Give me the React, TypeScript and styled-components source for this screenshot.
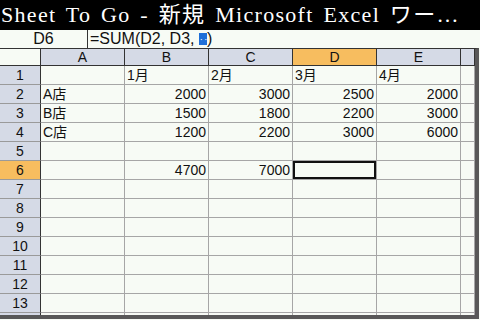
import React from "react";
import styled, { createGlobalStyle, css } from "styled-components";

const GlobalStyle = createGlobalStyle`
  html, body {
    margin: 0;
    padding: 0;
    width: 480px;
    height: 320px;
    overflow: hidden;
    background: #f7fbf5;
  }
`;

const Screen = styled.div`
  width: 480px;
  height: 320px;
  display: flex;
  flex-direction: column;
  background: #f7fbf5;
  font-family: "Liberation Sans", "Noto Sans CJK JP", sans-serif;
`;

const TitleBar = styled.div`
  height: 30px;
  flex: none;
  background: #000;
  color: #fff;
  font-family: "Liberation Serif", "Noto Sans CJK JP", serif;
  font-size: 22px;
  line-height: 29px;
  letter-spacing: 1.3px;
  word-spacing: 3px;
  padding-left: 1px;
  white-space: nowrap;
  overflow: hidden;
`;

const FormulaBar = styled.div`
  height: 18px;
  flex: none;
  display: flex;
  background: #f7fbf5;
  font-size: 16px;
  line-height: 18px;
  color: #111;
`;

const CellRef = styled.div`
  width: 87px;
  text-align: center;
  border-right: 1px solid #333;
`;

const Formula = styled.div`
  flex: 1;
  padding-left: 2px;
  white-space: nowrap;
`;

const Caret = styled.span`
  display: inline-block;
  width: 8px;
  height: 12px;
  background: #1f6fd8;
  color: #fff;
  font-size: 9px;
  line-height: 14px;
  vertical-align: -1px;
  text-align: center;
  overflow: hidden;
`;

const SheetFrame = styled.div`
  flex: none;
  width: 479px;
  height: 271px;
  box-sizing: border-box;
  border-top: 1px solid #333;
  border-right: 4px solid #585858;
  border-bottom: 4px solid #585858;
  overflow: hidden;
`;

const Grid = styled.div`
  display: grid;
  grid-template-columns: 41px repeat(5, 84px) 1fr;
  grid-template-rows: 17px;
  grid-auto-rows: 19px;
`;

const cellBase = css`
  box-sizing: border-box;
  border-right: 1px solid #a6a6a6;
  border-bottom: 1px solid #a6a6a6;
  white-space: nowrap;
  overflow: hidden;
`;

const Corner = styled.div`
  ${cellBase};
  background: #f7fbf5;
  border-right-color: #333;
  border-bottom-color: #333;
`;

const ColHead = styled.div<{ $active?: boolean }>`
  ${cellBase};
  background: ${(p) => (p.$active ? "#f7bd5f" : "#d5dae6")};
  border-right-color: #333;
  border-bottom-color: #333;
  text-align: center;
  font-size: 14px;
  line-height: 17px;
  color: #111;
`;

const RowHead = styled.div<{ $active?: boolean }>`
  ${cellBase};
  background: ${(p) => (p.$active ? "#f7bd5f" : "#d5dae6")};
  border-right-color: #333;
  border-bottom-color: #9a9a9a;
  text-align: center;
  font-size: 14px;
  line-height: 19px;
  color: #111;
`;

const Cell = styled.div<{ $num?: boolean; $selected?: boolean }>`
  ${cellBase};
  background: #f7fbf5;
  font-size: 14px;
  line-height: 19px;
  color: #111;
  text-align: ${(p) => (p.$num ? "right" : "left")};
  padding: 0 ${(p) => (p.$num ? "2px" : "0")} 0 ${(p) => (p.$num ? "0" : "2px")};
  ${(p) =>
    p.$selected &&
    css`
      box-shadow: inset 0 0 0 2px #111;
    `}
`;

const cols = ["A", "B", "C", "D", "E", ""];

const data: Record<number, (string | number)[]> = {
  1: ["", "1月", "2月", "3月", "4月", ""],
  2: ["A店", 2000, 3000, 2500, 2000, ""],
  3: ["B店", 1500, 1800, 2200, 3000, ""],
  4: ["C店", 1200, 2200, 3000, 6000, ""],
  6: ["", 4700, 7000, "", "", ""],
};

export default function App() {
  // row 14 only peeks in below row 13, so its label stays hidden
  const rows = Array.from({ length: 14 }, (_, i) => i + 1);
  return (
    <Screen>
      <GlobalStyle />
      <TitleBar>Sheet To Go - 新規 Microsoft Excel ワー…</TitleBar>
      <FormulaBar>
        <CellRef>D6</CellRef>
        <Formula>
          =SUM(D2, D3, <Caret>‥</Caret>)
        </Formula>
      </FormulaBar>
      <SheetFrame>
        <Grid>
          <Corner />
          {cols.map((c, i) => (
            <ColHead key={i} $active={c === "D"}>
              {c}
            </ColHead>
          ))}
          {rows.map((r) => {
            const vals = data[r] || ["", "", "", "", "", ""];
            return (
              <React.Fragment key={r}>
                <RowHead $active={r === 6}>{r < 14 ? r : ""}</RowHead>
                {vals.map((v, i) => (
                  <Cell key={i} $num={typeof v === "number"} $selected={r === 6 && i === 3}>
                    {v}
                  </Cell>
                ))}
              </React.Fragment>
            );
          })}
        </Grid>
      </SheetFrame>
    </Screen>
  );
}
